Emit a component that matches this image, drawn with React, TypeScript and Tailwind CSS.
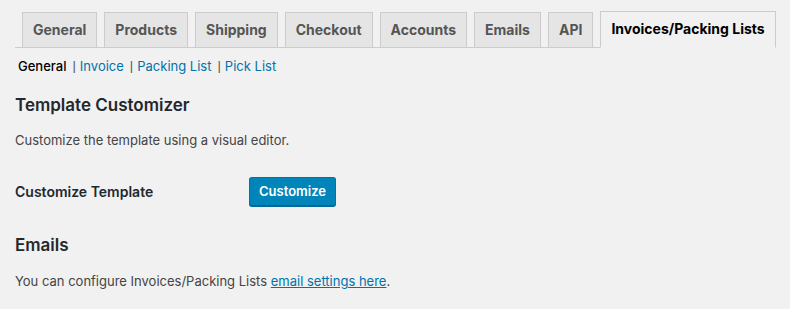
import React from "react";

const tabs = ["General", "Products", "Shipping", "Checkout", "Accounts", "Emails", "API"];

function Sep() {
  return (
    <span
      className="text-[#555] ml-[6px] mr-[4px]"
      style={{ fontFamily: '"Liberation Sans", Arial, sans-serif' }}
    >
      |
    </span>
  );
}

export default function App() {
  return (
    <div
      className="w-[790px] h-[309px] overflow-hidden bg-[#f1f1f1] text-[#444]"
      style={{ fontFamily: 'Inter, "Liberation Sans", Arial, sans-serif' }}
    >
      <div className="pl-[15px] pr-[14px] pt-[12px]">
        <nav className="flex items-end border-b border-[#ccc] h-[36px]">
          {tabs.map((t) => (
            <span
              key={t}
              className="ml-[7px] h-[36px] -mb-px px-[10px] border border-[#ccc] bg-[#e5e5e5] text-[#555] text-[14px] font-bold leading-[34px]"
            >
              {t}
            </span>
          ))}
          <span className="ml-[7px] h-[37px] -mb-px px-[10px] border border-[#ccc] border-b-[#f1f1f1] bg-[#f1f1f1] text-black text-[14px] font-bold leading-[34px]">
            Invoices/Packing Lists
          </span>
        </nav>
        <div className="pl-[3px] mt-[9px] text-[13px] leading-[18px] flex items-center">
          <span className="text-black font-medium">General</span>
          <Sep />
          <span className="text-[#0073aa]">Invoice</span>
          <Sep />
          <span className="text-[#0073aa]">Packing List</span>
          <Sep />
          <span className="text-[#0073aa]">Pick List</span>
        </div>
        <h2 className="mt-[18px] text-[17px] leading-[24px] font-semibold text-[#23282d]">Template Customizer</h2>
        <p className="mt-[14px] text-[13px] leading-[18px] text-[#444]">Customize the template using a visual editor.</p>
        <div className="mt-[28px] flex items-center">
          <div className="w-[234px] text-[14px] font-semibold text-[#23282d]">Customize Template</div>
          <button className="h-[29px] w-[87px] rounded-[3px] border border-[#0073aa] border-b-[#006799] bg-[#0085ba] text-white text-[13px] font-semibold shadow-[0_1px_0_#006799]">
            Customize
          </button>
        </div>
        <h2 className="mt-[27px] text-[17px] leading-[24px] font-semibold text-[#23282d]">Emails</h2>
        <p className="mt-[15px] text-[13px] leading-[18px] text-[#444]">
          You can configure Invoices/Packing Lists{" "}
          <span className="text-[#0073aa] underline">email settings here</span>.
        </p>
      </div>
    </div>
  );
}
